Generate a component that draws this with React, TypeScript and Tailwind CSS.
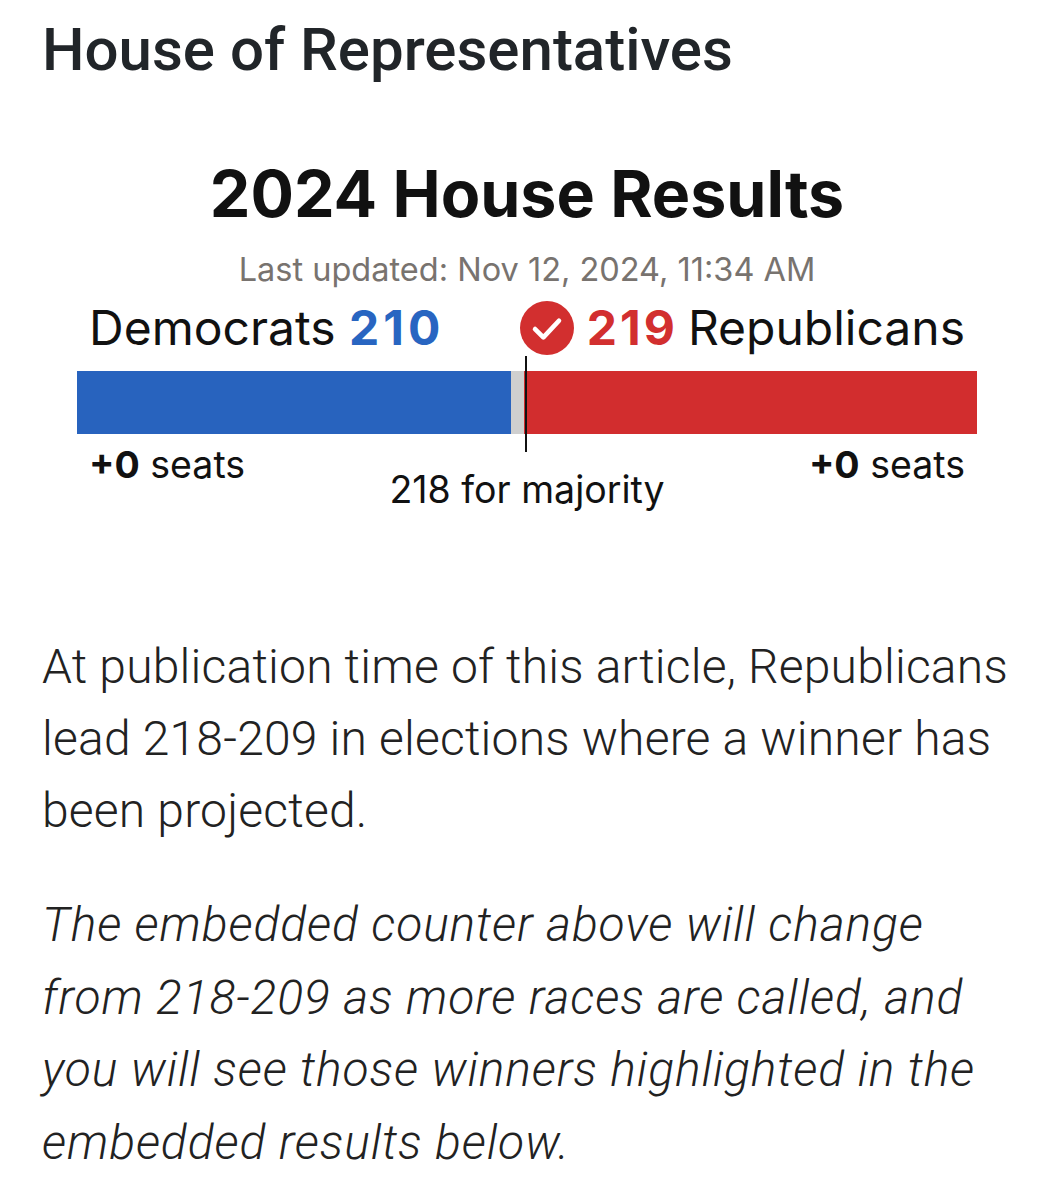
import React from "react";

const seats = { dem: 210, rep: 219, total: 435, majority: 218 };

function CheckBadge() {
  return (
    <svg width="54" height="54" viewBox="0 0 52 52" className="shrink-0">
      <circle cx="26" cy="26" r="26" fill="#d22f2f" />
      <polyline
        points="14.5,27 22.5,35 37.5,19"
        fill="none"
        stroke="#fff"
        strokeWidth="4.5"
        strokeLinecap="round"
        strokeLinejoin="round"
      />
    </svg>
  );
}

function HouseCounter() {
  return (
    <div className="mx-auto w-[900px] font-['Inter','Liberation_Sans',sans-serif] text-[#111]">
      <h3 className="mt-[69px] text-center text-[64.5px] leading-[78px] font-bold">
        2024 House Results
      </h3>
      <p className="mt-[19px] text-center text-[32.5px] leading-[36px] text-[#78736f]">
        Last updated: Nov 12, 2024, 11:34 AM
      </p>

      {/* party labels */}
      <div className="mt-[11px] flex items-center justify-between px-[12px] text-[48px] leading-[58px]">
        <div>
          Democrats <span className="font-bold tracking-[4px] text-[#2865c1]">{seats.dem}</span>
        </div>
        <div className="flex items-center">
          <CheckBadge />
          <span className="ml-[13px] font-bold tracking-[3px] text-[#d22f2f]">{seats.rep}</span>
          <span className="ml-[10px]">Republicans</span>
        </div>
      </div>

      {/* seat bar */}
      <div className="relative mt-[14px] flex h-[63px]">
        <div className="w-[434px] bg-[#2863be]" />
        <div className="w-[13px] bg-[#cfcfcf]" />
        <div className="flex-1 bg-[#d22d2e]" />
        <div className="absolute left-[448px] top-[-15px] bottom-[-18px] w-[2px] bg-[#111]" />
      </div>

      <div className="mt-[8px] flex items-start justify-between px-[12px] text-[37.5px] leading-[45px]">
        <div>
          <span className="font-bold">+0</span> seats
        </div>
        <div className="mt-[25px]">{seats.majority} for majority</div>
        <div>
          <span className="font-bold">+0</span> seats
        </div>
      </div>
    </div>
  );
}

export default function App() {
  return (
    <div className="min-h-[1200px] w-[1054px] bg-white px-[42px] pt-[14px] font-['Roboto',sans-serif] text-[#222]">
      <h2 className="text-[60px] leading-[72px] font-medium text-[#212529]">House of Representatives</h2>

      <HouseCounter />

      <p className="mt-[119px] text-[48px] leading-[72px] font-light tracking-[0.2px]">
        At publication time of this article, Republicans lead 218-209 in elections where a winner has been
        projected.
      </p>
      <p className="mt-[42px] text-[48px] leading-[72.5px] font-light italic tracking-[0.9px]">
        The embedded counter above will change from 218-209 as more races are called, and you will see those
        winners highlighted in the embedded results below.
      </p>
    </div>
  );
}
